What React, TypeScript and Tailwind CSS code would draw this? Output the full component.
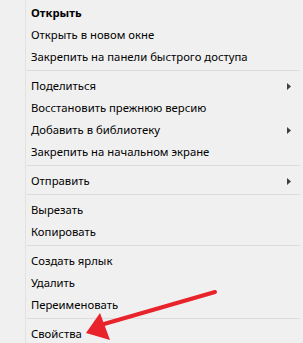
import { ReactNode } from "react";

type Entry =
  | { kind: "item"; label: string; bold?: boolean; submenu?: boolean }
  | { kind: "sep" };

const entries: Entry[] = [
  { kind: "item", label: "Открыть", bold: true },
  { kind: "item", label: "Открыть в новом окне" },
  { kind: "item", label: "Закрепить на панели быстрого доступа" },
  { kind: "sep" },
  { kind: "item", label: "Поделиться", submenu: true },
  { kind: "item", label: "Восстановить прежнюю версию" },
  { kind: "item", label: "Добавить в библиотеку", submenu: true },
  { kind: "item", label: "Закрепить на начальном экране" },
  { kind: "sep" },
  { kind: "item", label: "Отправить", submenu: true },
  { kind: "sep" },
  { kind: "item", label: "Вырезать" },
  { kind: "item", label: "Копировать" },
  { kind: "sep" },
  { kind: "item", label: "Создать ярлык" },
  { kind: "item", label: "Удалить" },
  { kind: "item", label: "Переименовать" },
  { kind: "sep" },
  { kind: "item", label: "Свойства" },
];

function MenuItem({ children, bold, submenu }: { children: ReactNode; bold?: boolean; submenu?: boolean }) {
  return (
    <div className="flex h-[22px] items-center pl-[5px] pr-[12px]">
      <span className={`flex-1 leading-none ${bold ? "font-bold" : ""}`}>{children}</span>
      {submenu && (
        <svg width="4" height="7" viewBox="0 0 4 7" className="text-[#404040]">
          <path d="M0 0 L4 3.5 L0 7 Z" fill="currentColor" />
        </svg>
      )}
    </div>
  );
}

export default function App() {
  return (
    <div
      className="relative flex h-[343px] w-[303px] overflow-hidden bg-[#f0f0f0] text-[11.3px] text-black"
      style={{ fontFamily: '"Noto Sans", "Open Sans", sans-serif' }}
    >
      {/* icon gutter */}
      <div className="w-[26px] shrink-0 border-r border-[#e2e2e2]" />

      <div className="flex-1 pt-[2px]">
        {entries.map((e, i) =>
          e.kind === "sep" ? (
            <div key={i} className="h-[7px] pt-[2px]">
              <div className="ml-[1px] mr-[3px] h-px bg-[#dcdcdc]" />
            </div>
          ) : (
            <MenuItem key={i} bold={e.bold} submenu={e.submenu}>
              {e.label}
            </MenuItem>
          )
        )}
      </div>

      {/* red annotation arrow */}
      <svg className="pointer-events-none absolute left-0 top-0" width="303" height="343" viewBox="0 0 303 343">
        <line x1="215" y1="292" x2="104" y2="324" stroke="#e8232b" strokeWidth="4" strokeLinecap="round" />
        <path d="M86 333 L100 313 L110 340 Z" fill="#e8232b" />
      </svg>
    </div>
  );
}
